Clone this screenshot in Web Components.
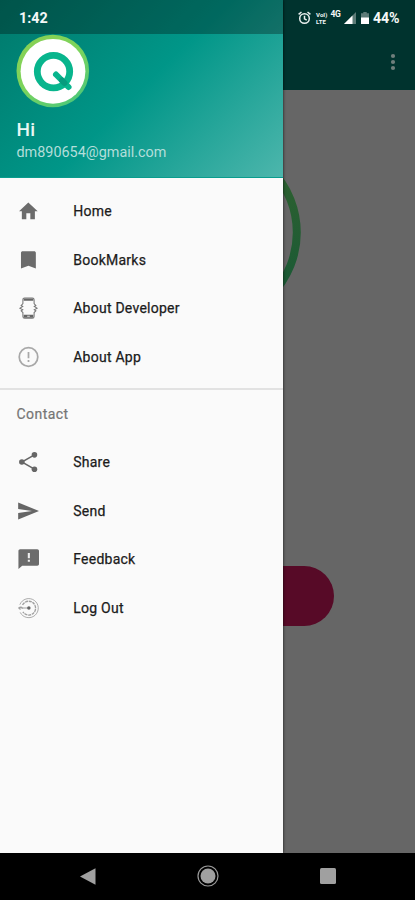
<!DOCTYPE html>
<html lang="en">
<head>
<meta charset="utf-8">
<title>Navigation drawer</title>
<style>
body{margin:0;background:#000;font-family:Roboto,"Noto Sans",sans-serif}
</style>
</head>
<body>
<phone-screen>
  <app-page slot="page"></app-page>
  <nav-drawer slot="drawer">
    <drawer-header slot="header" name="Hi" mail="dm890654@gmail.com"></drawer-header>
    <nav-item icon="home">Home</nav-item>
    <nav-item icon="bookmark">BookMarks</nav-item>
    <nav-item icon="developer">About Developer</nav-item>
    <nav-item icon="info">About App</nav-item>
    <nav-group>Contact</nav-group>
    <nav-item icon="share">Share</nav-item>
    <nav-item icon="send">Send</nav-item>
    <nav-item icon="feedback">Feedback</nav-item>
    <nav-item icon="logout">Log Out</nav-item>
  </nav-drawer>
  <status-bar slot="status"></status-bar>
  <system-nav slot="nav"></system-nav>
</phone-screen>
<script>
const ICONS = {
  home: '<path fill="#6b6b6b" d="M9.500 21.500v-7h4.600v7h5.200v-9.200h3.200L11.800 2.200 1.200 12.300h3.200v9.200z"/>',
  bookmark: '<path fill="#6b6b6b" d="M18.300 2H5.400C4.200 2 3.400 2.700 3.400 3.800V21.700L11.900 18.500l8.500 3.200V3.800c0-1.100-.8-1.800-2.100-1.800z"/>',
  developer: '<g fill="none" stroke="#777" stroke-width="1.200"><path d="M5.600 7V2.600Q5.600.6 7.600.6h8.800q2 0 2 2V7L20.400 9.200 18.600 10.200 21.800 12.200 18.600 14 20.400 15.200 18.400 17.200v4.400q0 2-2 2H7.600q-2 0-2-2V17.200L3.600 15.200 5.400 14 2.200 12.200 5.400 10.200 3.600 9.200z"/></g><path fill="#666" d="M6.500 1h11v2.600h-11zM6.500 19.800h11V23h-11z"/><path fill="#eee" d="M10.500 20.900h3v1h-3z"/>',
  info: '<circle cx="12" cy="12" r="10.600" fill="none" stroke="#a8a8a8" stroke-width="2"/><path fill="none" stroke="#a8a8a8" stroke-width="2" d="M12 6.300v7M12 15.500v2.200"/>',
  share: '<g fill="#666"><circle cx="4.400" cy="12" r="3.200"/><circle cx="18.800" cy="3.800" r="3.200"/><circle cx="18.800" cy="20.200" r="3.200"/></g><path fill="none" stroke="#666" stroke-width="1.700" d="M18.800 3.800 4.400 12l14.400 8.200"/>',
  send: '<path fill="#666" d="M.2 21.800 24 12 .2 2.200v7.500L16 12 .2 14.300z"/>',
  feedback: '<path fill="#6b6b6b" d="M22 .8H2.500C1.300.8.5 1.700.5 2.800V23.500L4.800 19.700H22c1.200 0 2-.9 2-2V2.800c0-1.100-.8-2-2-2z"/><path fill="#eee" d="M11.200 5h2.400v6h-2.400zM11.200 12.900h2.400v2.300h-2.400z"/>',
  logout: '<g fill="none" stroke="#a0a0a0"><path stroke-width="1" d="M2.100 8.200A10.900 10.900 0 1 1 2.500 17"/><path stroke-width="1.500" stroke-dasharray="3.500 .8" d="M5.200 8.500A7.900 7.900 0 1 1 5.600 16.500"/><path stroke-width="1.200" d="M.8 12h11M5.600 12.800Q3.800 9.500.8 12l2 2"/></g><circle cx="12.400" cy="12" r="2" fill="#666"/>'
};

function define(name, html) {
  customElements.define(name, class extends HTMLElement {
    connectedCallback() {
      if (this.shadowRoot) return;
      const template = document.createElement('template');
      template.innerHTML = typeof html === 'function' ? html(this) : html;
      this.attachShadow({mode: 'open'}).append(template.content.cloneNode(true));
    }
  });
}

define('phone-screen', `<style>
:host{display:grid;grid-template:852.5px 47.5px / 415px;width:415px;height:900px;overflow:hidden;position:relative}
slot[name=page]::slotted(*){grid-area:1/1}
slot[name=drawer]::slotted(*){grid-area:1/1;z-index:1}
slot[name=status]::slotted(*){grid-area:1/1;align-self:start;z-index:2}
slot[name=nav]::slotted(*){grid-area:2/1;z-index:3}
</style><slot name="page"></slot><slot name="drawer"></slot><slot name="status"></slot><slot name="nav"></slot>`);

define('app-page', `<style>
:host{display:grid;grid-template-rows:90px 49px 187px 240px 60px 1fr;justify-items:center;background:#666}
header{grid-row:1;width:100%;box-sizing:border-box;background:#00332e;display:flex;justify-content:flex-end;align-items:flex-start;padding:53px 19.500px 0 0}
.ring{grid-row:3}
.pill{grid-row:5;width:253px;border-radius:30px;background:#570a27}
</style>
<header><svg width="6" height="18" fill="#6f7f7c"><circle cx="3" cy="3" r="2.100"/><circle cx="3" cy="9" r="2.100"/><circle cx="3" cy="15" r="2.100"/></svg></header>
<svg class="ring" width="187" height="187"><defs><linearGradient id="g" x1="0" y1="0" x2="0" y2="1"><stop offset=".2" stop-color="#2c6030"/><stop offset=".8" stop-color="#1b5a35"/></linearGradient></defs><circle cx="93.500" cy="93.500" r="89.300" fill="none" stroke="url(#g)" stroke-width="8"/></svg>
<div class="pill"></div>`);

define('nav-drawer', `<style>
:host{display:flex;flex-direction:column;width:283.300px;background:#fafafa;box-shadow:0 0 3px rgba(0,0,0,.75)}
nav{display:flex;flex-direction:column;padding-top:9px}
</style><slot name="header"></slot><nav><slot></slot></nav>`);

define('drawer-header', el => `<style>
:host{display:flex;flex-direction:column;box-sizing:border-box;height:178px;padding:34px 16px 0 16.500px;background:linear-gradient(135deg,#00796b 0%,#009688 50%,#4db6ac 100%);border-bottom:1px solid #099d8e}
svg{display:block;margin-left:-.5px}
.name{font:500 19px/22px Roboto,sans-serif;color:#e8f7f4;margin-top:11px;letter-spacing:.3px}
.mail{font:400 14.400px/18px Roboto,sans-serif;color:#b3deda;margin-top:3px;letter-spacing:0}
</style>
<svg width="74" height="74" viewBox="0 0 74 74"><defs><linearGradient id="r" x1="0" y1="0" x2=".7" y2="1"><stop offset="0" stop-color="#8bd052"/><stop offset=".55" stop-color="#7bd45c"/><stop offset="1" stop-color="#4fc878"/></linearGradient></defs>
<circle cx="36.800" cy="37" r="36.300" fill="url(#r)"/><circle cx="37" cy="37.300" r="32.400" fill="#fff"/>
<circle cx="37.500" cy="37.600" r="16.200" fill="none" stroke="#08b58d" stroke-width="6.800"/><path d="M40 40.500 52.500 53" stroke="#08b58d" stroke-width="6" stroke-linecap="round"/><path d="M46 46.500 48.500 49" stroke="#079c7e" stroke-width="6" stroke-linecap="round"/></svg>
<div class="name">${el.getAttribute('name')}</div><div class="mail">${el.getAttribute('mail')}</div>`);

define('nav-item', el => `<style>
:host{display:flex;align-items:center;height:48.450px;padding-left:18.300px;gap:33.900px;font:400 14px/20px Roboto,sans-serif;letter-spacing:.25px;color:#1c1c1c;-webkit-text-stroke:.25px #1c1c1c}
svg{flex:none}
</style><svg width="21" height="22" viewBox="0 0 24 24" overflow="visible">${ICONS[el.getAttribute('icon')]}</svg><span><slot></slot></span>`);

define('nav-group', `<style>
:host{display:flex;align-items:center;box-sizing:border-box;height:50.500px;margin-top:7px;padding-left:16.500px;border-top:2px solid #e2e2e2;font:400 14px/20px Roboto,sans-serif;letter-spacing:.45px;color:#757575;-webkit-text-stroke:.2px #757575}
</style><slot></slot>`);

define('status-bar', `<style>
:host{display:flex;align-items:center;box-sizing:border-box;width:283.300px;height:34px;padding:2px 0 0 19px;background:rgba(0,0,0,.3);color:#f4f8f7;font:700 14.300px/18px Roboto,sans-serif}
.time{flex:none;width:278.500px}
.right{flex:none;display:flex;align-items:center}
.lte{display:flex;flex-direction:column;gap:.5px;font:700 6px/7px Roboto,sans-serif;letter-spacing:.1px;margin-left:5.500px;width:14px}
.g{font:700 8.500px/9px Roboto,sans-serif;margin:-8px 0 0 .5px;width:12px;letter-spacing:-.3px}
.sig{margin-left:1px}.bat{margin-left:5.500px}
.pct{margin-left:4px;font-size:14.200px;letter-spacing:-.2px}
</style>
<div class="time">1:42</div>
<div class="right">
<svg width="13" height="14" fill="none" stroke="#e8efee" stroke-width="1.500"><circle cx="6.500" cy="7.500" r="4.800"/><path d="M6.500 4.800v3l2.200 1.300M.6 3.400 3.500 1M12.400 3.400 9.500 1"/></svg>
<div class="lte"><span>VoI)</span><span>LTE</span></div><div class="g">4G</div>
<svg class="sig" width="12" height="12"><path fill="#5c7b77" d="M0 12 12 0v12z"/><path fill="#fff" d="M0 12 8.500 3.500V12z"/></svg>
<svg class="bat" width="8" height="12"><path fill="#5c7b77" d="M2.300 0h3.400v1.300H8V6H0V1.300h2.300z"/><path fill="#fff" d="M0 5.500h8V12H0z"/></svg>
<span class="pct">44%</span>
</div>`);

define('system-nav', `<style>
:host{display:flex;background:#000;box-sizing:border-box;padding:0 27.500px}
div{flex:1;display:flex;align-items:center;justify-content:center}
</style>
<div><svg width="16" height="17"><path fill="#a0a0a0" d="M0 8.500 15.500.3v16.400z"/></svg></div>
<div><svg width="22" height="22"><circle cx="11" cy="11" r="10" fill="none" stroke="#999" stroke-width="1.200"/><circle cx="11" cy="11" r="7.500" fill="#a0a0a0"/></svg></div>
<div><svg width="16" height="16"><rect width="16" height="16" rx="1.500" fill="#a0a0a0"/></svg></div>`);
</script>
</body>
</html>
